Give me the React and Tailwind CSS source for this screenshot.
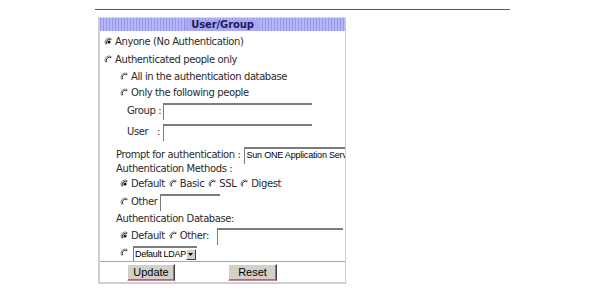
import React from "react";

const Radio = ({ checked }) => (
  <svg width="10" height="10" viewBox="0 0 10 10" className="shrink-0">
    <circle cx="5" cy="5" r="4" fill="#fff" />
    <path d="M2.17 7.83 A4 4 0 0 1 7.83 2.17" stroke="#8a8a8a" strokeWidth="1" fill="none" />
    <path d="M2.9 7.1 A3 3 0 0 1 7.1 2.9" stroke="#3a3a3a" strokeWidth="1" fill="none" />
    {checked && <circle cx="5" cy="5" r="1.6" fill="#111" />}
  </svg>
);

const Field = ({ className, children }) => (
  <div
    className={`h-[17px] shrink-0 bg-white border-t-2 border-l border-t-[#7c7c7c] border-l-[#7c7c7c] overflow-hidden whitespace-nowrap ${className}`}
  >
    {children}
  </div>
);

const Button = ({ label, className }) => (
  <div
    className={`h-[17px] flex items-center justify-center bg-[#d4d0c8] border border-t-white border-l-white border-r-[#404040] border-b-[#c080a0] shadow-[inset_-1px_-1px_0_#808080] font-['Liberation_Sans',sans-serif] text-[11px] tracking-normal text-black ${className}`}
  >
    {label}
  </div>
);

const Opt = ({ checked, label, className = "" }) => (
  <span className={`flex items-center whitespace-nowrap ${className}`}>
    <Radio checked={checked} />
    <span className="ml-[1px]">{label}</span>
  </span>
);

const App = () => {
  return (
    <div className="w-[592px] h-[302px] bg-white font-['DejaVu_Sans',sans-serif] text-[10px] tracking-[-0.4px] text-[#2a2a2a] leading-none whitespace-nowrap">
      {/* top rule */}
      <div className="pt-[9px] pl-[95px]">
        <div className="w-[415px] h-px bg-[#555]" />
      </div>

      {/* panel */}
      <div className="ml-[98px] mt-[7px] w-[248px] border-l-2 border-r border-[#cfcfcf]">
        {/* header */}
        <div className="h-[14px] flex items-center justify-center bg-[#a8a8f6] bg-[repeating-linear-gradient(90deg,#9696e8_0px,#9696e8_1px,#b6b6fc_1px,#b6b6fc_3px)] border-t border-[#d8d8e8]">
          <span className="font-bold tracking-[-0.1px] text-[#1c1c5a] bg-[#a8a8f6] px-[6px]">User/Group</span>
        </div>

        <div className="pl-[4px]">
          <div className="h-[18px] mt-[2px] flex items-center">
            <Opt checked label="Anyone (No Authentication)" />
          </div>
          <div className="h-[18px] flex items-center">
            <Opt label="Authenticated people only" />
          </div>

          <div className="pl-[16px]">
            <div className="h-[16px] flex items-center">
              <Opt label="All in the authentication database" />
            </div>
            <div className="h-[16px] flex items-center">
              <Opt label="Only the following people" />
            </div>
          </div>

          <div className="pl-[23px] mt-[1px]">
            <div className="h-[18px] flex items-center">
              <span className="w-[36px] shrink-0">Group :</span>
              <Field className="w-[149px]" />
            </div>
            <div className="h-[18px] mt-[3px] flex items-center">
              <span className="w-[36px] shrink-0 flex">
                <span className="w-[33px] flex justify-between">
                  <span>User</span>
                  <span>:</span>
                </span>
              </span>
              <Field className="w-[149px]" />
            </div>
          </div>

          <div className="pl-[12px] mt-[7px]">
            <div className="h-[14px] flex items-center">
              <span>Prompt for authentication :</span>
              <Field className="ml-[4px] w-[101px] h-[16px] pl-[1px] font-['Liberation_Sans',sans-serif] text-[9px] tracking-[-0.2px] text-black leading-[13px]">
                Sun ONE Application Server
              </Field>
            </div>
            <div className="h-[14px] flex items-center">Authentication Methods :</div>
          </div>

          <div className="pl-[16px]">
            <div className="h-[16px] flex items-center">
              <Opt checked label="Default" />
              <Opt label="Basic" className="ml-[4px]" />
              <Opt label="SSL" className="ml-[4px]" />
              <Opt label="Digest" className="ml-[4px]" />
            </div>
            <div className="h-[18px] mt-[1px] flex items-center">
              <Opt label="Other" />
              <Field className="ml-[3px] w-[60px]" />
            </div>
          </div>

          <div className="pl-[12px] h-[16px] flex items-center">Authentication Database:</div>

          <div className="pl-[16px]">
            <div className="h-[18px] flex items-center">
              <Opt checked label="Default" />
              <Opt label="Other:" className="ml-[4px]" />
              <Field className="ml-[8px] w-[126px]" />
            </div>
            <div className="h-[16px] flex items-center">
              <Radio />
              <div className="ml-[3px] h-[15px] w-[64px] flex border-t-2 border-l border-[#7c7c7c] bg-white">
                <span className="flex-1 pl-[1px] font-['Liberation_Sans',sans-serif] text-[9px] tracking-[-0.3px] text-black leading-[13px]">
                  Default LDAP
                </span>
                <span className="w-[11px] h-[11px] mt-[1px] mr-[1px] flex items-center justify-center bg-[#d4d0c8] border border-t-white border-l-white border-r-[#404040] border-b-[#404040]">
                  <svg width="5" height="3" viewBox="0 0 5 3">
                    <path d="M0 0 H5 L2.5 3 Z" fill="#000" />
                  </svg>
                </span>
              </div>
            </div>
          </div>
        </div>

        {/* buttons */}
        <div className="border-t border-b-2 border-t-[#a8a8a8] border-b-[#cfcfcf] h-[23px] flex items-center pl-[27px]">
          <Button label="Update" className="w-[48px]" />
          <Button label="Reset" className="ml-[53px] w-[49px]" />
        </div>
      </div>
    </div>
  );
};

export default App;
